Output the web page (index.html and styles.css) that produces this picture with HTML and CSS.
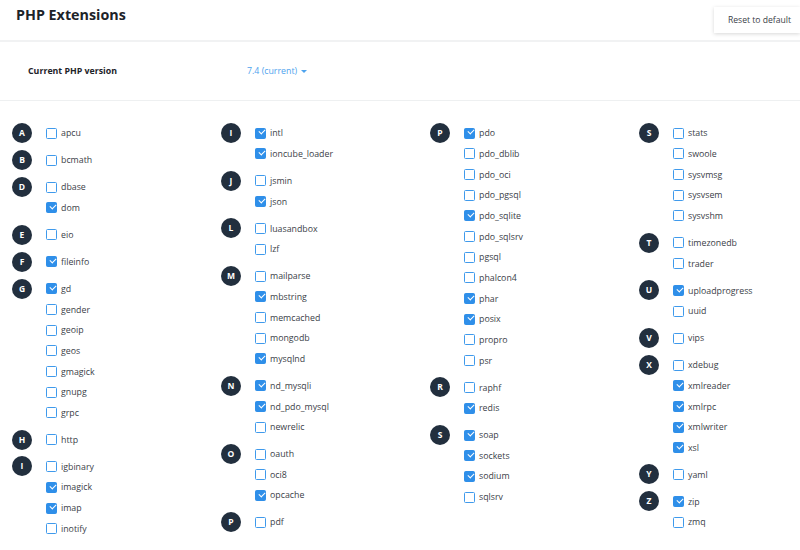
FILE: index.html
```html
<!doctype html>
<html lang="en">
<head>
    <meta charset="UTF-8">
    <title>PHP Extensions</title>
    <link rel="stylesheet" href="styles.css">
</head>
<body>

    <div class="header">
        <h1 class="title">PHP Extensions</h1>
        <a class="btn-reset" href="javascript:void(0)">Reset to default</a>
    </div>

    <div class="version-row">
        <div class="version-label">Current PHP version</div>
        <a class="version-select" href="javascript:void(0)">7.4 (current) <span class="caret"></span></a>
    </div>

    <div class="ext-grid">
        <!-- column 1 -->
        <div class="ext-col">
            <div class="group"><span class="letter">A</span><ul>
                <li><span class="cb"></span>apcu</li>
            </ul></div>
            <div class="group"><span class="letter">B</span><ul>
                <li><span class="cb"></span>bcmath</li>
            </ul></div>
            <div class="group"><span class="letter">D</span><ul>
                <li><span class="cb"></span>dbase</li>
                <li><span class="cb on"></span>dom</li>
            </ul></div>
            <div class="group"><span class="letter">E</span><ul>
                <li><span class="cb"></span>eio</li>
            </ul></div>
            <div class="group"><span class="letter">F</span><ul>
                <li><span class="cb on"></span>fileinfo</li>
            </ul></div>
            <div class="group"><span class="letter">G</span><ul>
                <li><span class="cb on"></span>gd</li>
                <li><span class="cb"></span>gender</li>
                <li><span class="cb"></span>geoip</li>
                <li><span class="cb"></span>geos</li>
                <li><span class="cb"></span>gmagick</li>
                <li><span class="cb"></span>gnupg</li>
                <li><span class="cb"></span>grpc</li>
            </ul></div>
            <div class="group"><span class="letter">H</span><ul>
                <li><span class="cb"></span>http</li>
            </ul></div>
            <div class="group"><span class="letter">I</span><ul>
                <li><span class="cb"></span>igbinary</li>
                <li><span class="cb on"></span>imagick</li>
                <li><span class="cb on"></span>imap</li>
                <li><span class="cb"></span>inotify</li>
            </ul></div>
        </div>

        <!-- column 2 -->
        <div class="ext-col">
            <div class="group"><span class="letter">I</span><ul>
                <li><span class="cb on"></span>intl</li>
                <li><span class="cb on"></span>ioncube_loader</li>
            </ul></div>
            <div class="group"><span class="letter">J</span><ul>
                <li><span class="cb"></span>jsmin</li>
                <li><span class="cb on"></span>json</li>
            </ul></div>
            <div class="group"><span class="letter">L</span><ul>
                <li><span class="cb"></span>luasandbox</li>
                <li><span class="cb"></span>lzf</li>
            </ul></div>
            <div class="group"><span class="letter">M</span><ul>
                <li><span class="cb"></span>mailparse</li>
                <li><span class="cb on"></span>mbstring</li>
                <li><span class="cb"></span>memcached</li>
                <li><span class="cb"></span>mongodb</li>
                <li><span class="cb on"></span>mysqlnd</li>
            </ul></div>
            <div class="group"><span class="letter">N</span><ul>
                <li><span class="cb on"></span>nd_mysqli</li>
                <li><span class="cb on"></span>nd_pdo_mysql</li>
                <li><span class="cb"></span>newrelic</li>
            </ul></div>
            <div class="group"><span class="letter">O</span><ul>
                <li><span class="cb"></span>oauth</li>
                <li><span class="cb"></span>oci8</li>
                <li><span class="cb on"></span>opcache</li>
            </ul></div>
            <div class="group"><span class="letter">P</span><ul>
                <li><span class="cb"></span>pdf</li>
            </ul></div>
        </div>

        <!-- column 3 -->
        <div class="ext-col">
            <div class="group"><span class="letter">P</span><ul>
                <li><span class="cb on"></span>pdo</li>
                <li><span class="cb"></span>pdo_dblib</li>
                <li><span class="cb"></span>pdo_oci</li>
                <li><span class="cb"></span>pdo_pgsql</li>
                <li><span class="cb on"></span>pdo_sqlite</li>
                <li><span class="cb"></span>pdo_sqlsrv</li>
                <li><span class="cb"></span>pgsql</li>
                <li><span class="cb"></span>phalcon4</li>
                <li><span class="cb on"></span>phar</li>
                <li><span class="cb on"></span>posix</li>
                <li><span class="cb"></span>propro</li>
                <li><span class="cb"></span>psr</li>
            </ul></div>
            <div class="group"><span class="letter">R</span><ul>
                <li><span class="cb"></span>raphf</li>
                <li><span class="cb on"></span>redis</li>
            </ul></div>
            <div class="group"><span class="letter">S</span><ul>
                <li><span class="cb on"></span>soap</li>
                <li><span class="cb on"></span>sockets</li>
                <li><span class="cb on"></span>sodium</li>
                <li><span class="cb"></span>sqlsrv</li>
            </ul></div>
        </div>

        <!-- column 4 -->
        <div class="ext-col">
            <div class="group"><span class="letter">S</span><ul>
                <li><span class="cb"></span>stats</li>
                <li><span class="cb"></span>swoole</li>
                <li><span class="cb"></span>sysvmsg</li>
                <li><span class="cb"></span>sysvsem</li>
                <li><span class="cb"></span>sysvshm</li>
            </ul></div>
            <div class="group"><span class="letter">T</span><ul>
                <li><span class="cb"></span>timezonedb</li>
                <li><span class="cb"></span>trader</li>
            </ul></div>
            <div class="group"><span class="letter">U</span><ul>
                <li><span class="cb on"></span>uploadprogress</li>
                <li><span class="cb"></span>uuid</li>
            </ul></div>
            <div class="group"><span class="letter">V</span><ul>
                <li><span class="cb"></span>vips</li>
            </ul></div>
            <div class="group"><span class="letter">X</span><ul>
                <li><span class="cb"></span>xdebug</li>
                <li><span class="cb on"></span>xmlreader</li>
                <li><span class="cb on"></span>xmlrpc</li>
                <li><span class="cb on"></span>xmlwriter</li>
                <li><span class="cb on"></span>xsl</li>
            </ul></div>
            <div class="group"><span class="letter">Y</span><ul>
                <li><span class="cb"></span>yaml</li>
            </ul></div>
            <div class="group"><span class="letter">Z</span><ul>
                <li><span class="cb on"></span>zip</li>
                <li><span class="cb"></span>zmq</li>
            </ul></div>
        </div>
    </div>

</body>
</html>
```

FILE: styles.css
```css
*{
    padding: 0;
    margin: 0;
    box-sizing: border-box;
}
body{
    font-family: "Open Sans", "Liberation Sans", sans-serif;
    font-size: 8.8px;
    color: #3b4148;
    background-color: #fff;
    overflow: hidden;
}
a{
    text-decoration: none;
}
ul,li{
    list-style: none;
}

/* header */
.header{
    height: 42px;
    display: flex;
    justify-content: space-between;
    align-items: flex-start;
    border-bottom: 2px solid #f1f2f3;
}
.title{
    font-size: 14.3px;
    font-weight: 700;
    color: #1d2329;
    line-height: 30px;
    padding-left: 16px;
}
.btn-reset{
    margin-top: 7px;
    height: 26px;
    line-height: 26px;
    padding: 0 9px 0 14px;
    background-color: #fff;
    color: #3b4148;
    font-size: 8.6px;
    box-shadow: 0 1px 4px rgba(0,0,0,.16);
}

/* version */
.version-row{
    height: 59px;
    display: flex;
    align-items: center;
    border-bottom: 1px solid #eef0f1;
}
.version-label{
    width: 247px;
    padding-left: 28px;
    font-weight: 700;
    color: #1d2329;
}
.version-select{
    color: #4ea3ee;
    display: flex;
    align-items: center;
}
.caret{
    display: inline-block;
    margin-left: 4px;
    border-left: 3px solid transparent;
    border-right: 3px solid transparent;
    border-top: 3px solid #4ea3ee;
}

/* extension list */
.ext-grid{
    display: grid;
    grid-template-columns: 209px 209px 209px 1fr;
    padding: 22px 0 0 12px;
}
.group{
    display: flex;
    align-items: flex-start;
    margin-bottom: 6.33px;
}
.letter{
    flex-shrink: 0;
    width: 20px;
    height: 20px;
    line-height: 20px;
    border-radius: 50%;
    background-color: #222f3e;
    color: #fff;
    text-align: center;
    font-weight: 700;
    font-size: 8.5px;
    margin-right: 14px;
}
.group li{
    height: 20.67px;
    display: flex;
    align-items: center;
}
.cb{
    position: relative;
    width: 11px;
    height: 11px;
    border: 1.5px solid #3f9aec;
    border-radius: 1.5px;
    margin-right: 4px;
    flex-shrink: 0;
}
.cb.on{
    background-color: #2f8fe9;
    border-color: #2f8fe9;
}
.cb.on:after{
    content: "";
    position: absolute;
    left: 2.6px;
    top: 0.6px;
    width: 5px;
    height: 3px;
    border-left: 1.2px solid #fff;
    border-bottom: 1.2px solid #fff;
    transform: rotate(-45deg);
}
```
